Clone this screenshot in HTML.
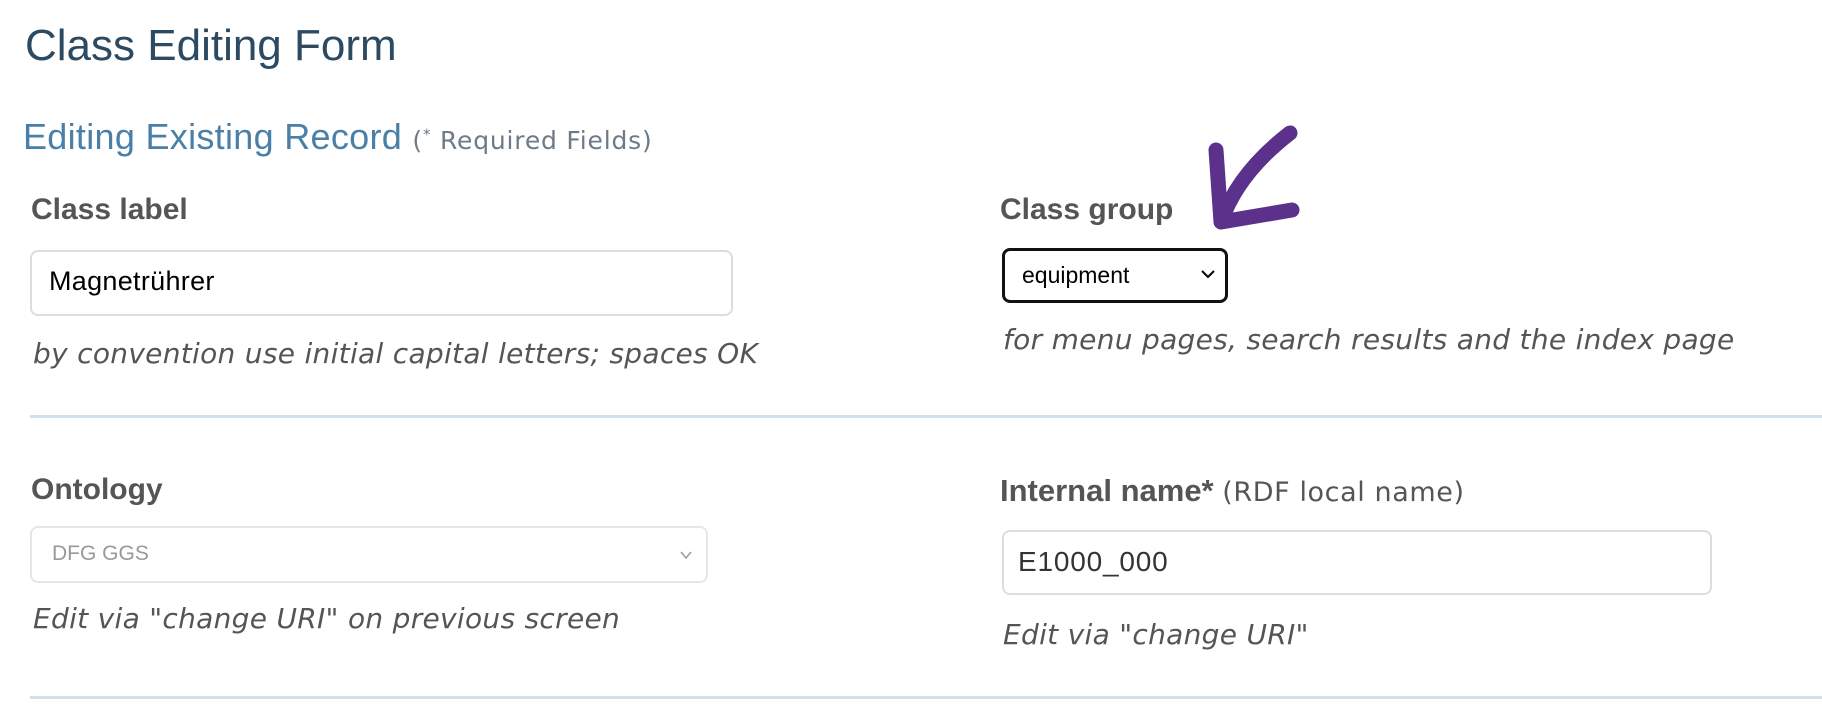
<!DOCTYPE html>
<html><head><meta charset="utf-8"><style>
body{margin:0;width:1822px;height:707px;background:#fff;font-family:"Liberation Sans",sans-serif;position:relative;overflow:hidden}
.a{position:absolute;white-space:nowrap}
h1{position:absolute;margin:0;left:25px;top:21px;font-size:44px;font-weight:normal;color:#2c4a62}
.sub{left:23px;top:116px;font-size:36px;color:#4a7fa8;letter-spacing:0.3px}
.sub span{font-family:"DejaVu Sans",sans-serif;font-size:25px;color:#6c7a89;letter-spacing:0.8px}
.lbl{font-size:30px;font-weight:bold;color:#555}
.help{font-family:"DejaVu Sans",sans-serif;font-size:28px;font-style:italic;color:#555;letter-spacing:0.3px}
.box{position:absolute;border:2px solid #ddd;border-radius:8px;background:#fff;box-sizing:border-box}
.hr{position:absolute;left:30px;right:0;height:3px;background:#d3e0ec}
</style></head><body>
<h1>Class Editing Form</h1>
<div class="a sub">Editing Existing Record <span>(<sup style="font-size:15px">*</sup> Required Fields)</span></div>

<div class="a lbl" style="left:31px;top:193px">Class label</div>
<div class="box" style="left:30px;top:250px;width:703px;height:66px"></div>
<div class="a" style="left:49px;top:266px;font-size:27px;color:#000;letter-spacing:0.3px">Magnetrührer</div>
<div class="a help" style="left:33px;top:337px">by convention use initial capital letters; spaces OK</div>

<div class="a lbl" style="left:1000px;top:193px">Class group</div>
<div style="position:absolute;left:1002px;top:248px;width:226px;height:55px;border:3px solid #111;border-radius:8px;box-sizing:border-box"></div>
<div class="a" style="left:1022px;top:262px;font-size:23px;color:#000">equipment</div>
<svg class="a" style="left:1200px;top:268px" width="16" height="12"><path d="M2 3 L8 9 L14 3" fill="none" stroke="#000" stroke-width="2"/></svg>
<div class="a help" style="left:1003px;top:323px">for menu pages, search results and the index page</div>

<svg class="a" style="left:0;top:0" width="1822" height="300"><path d="M1290 133 C1255 160 1232 190 1221 222 M1216 150 L1221 222 L1292 210" fill="none" stroke="#5b318c" stroke-width="15" stroke-linecap="round" stroke-linejoin="round"/></svg>

<div class="hr" style="top:415px"></div>

<div class="a lbl" style="left:31px;top:473px">Ontology</div>
<div class="box" style="left:30px;top:526px;width:678px;height:57px;border-color:#e6e6e6"></div>
<div class="a" style="left:52px;top:542px;font-size:21px;color:#999">DFG GGS</div>
<svg class="a" style="left:679px;top:549px" width="14" height="12"><path d="M2 3 L7 9 L12 3" fill="none" stroke="#999" stroke-width="1.5"/></svg>
<div class="a help" style="left:33px;top:602px">Edit via "change URI" on previous screen</div>

<div class="a lbl" style="left:1000px;top:473px;font-size:31px">Internal name* <span style="font-weight:normal;font-family:'DejaVu Sans',sans-serif;font-size:27px;letter-spacing:0.6px">(RDF local name)</span></div>
<div class="box" style="left:1002px;top:530px;width:710px;height:65px"></div>
<div class="a" style="left:1018px;top:546px;font-size:28px;color:#333;letter-spacing:0.8px">E1000_000</div>
<div class="a help" style="left:1003px;top:618px">Edit via "change URI"</div>

<div class="hr" style="top:696px"></div>
</body></html>
